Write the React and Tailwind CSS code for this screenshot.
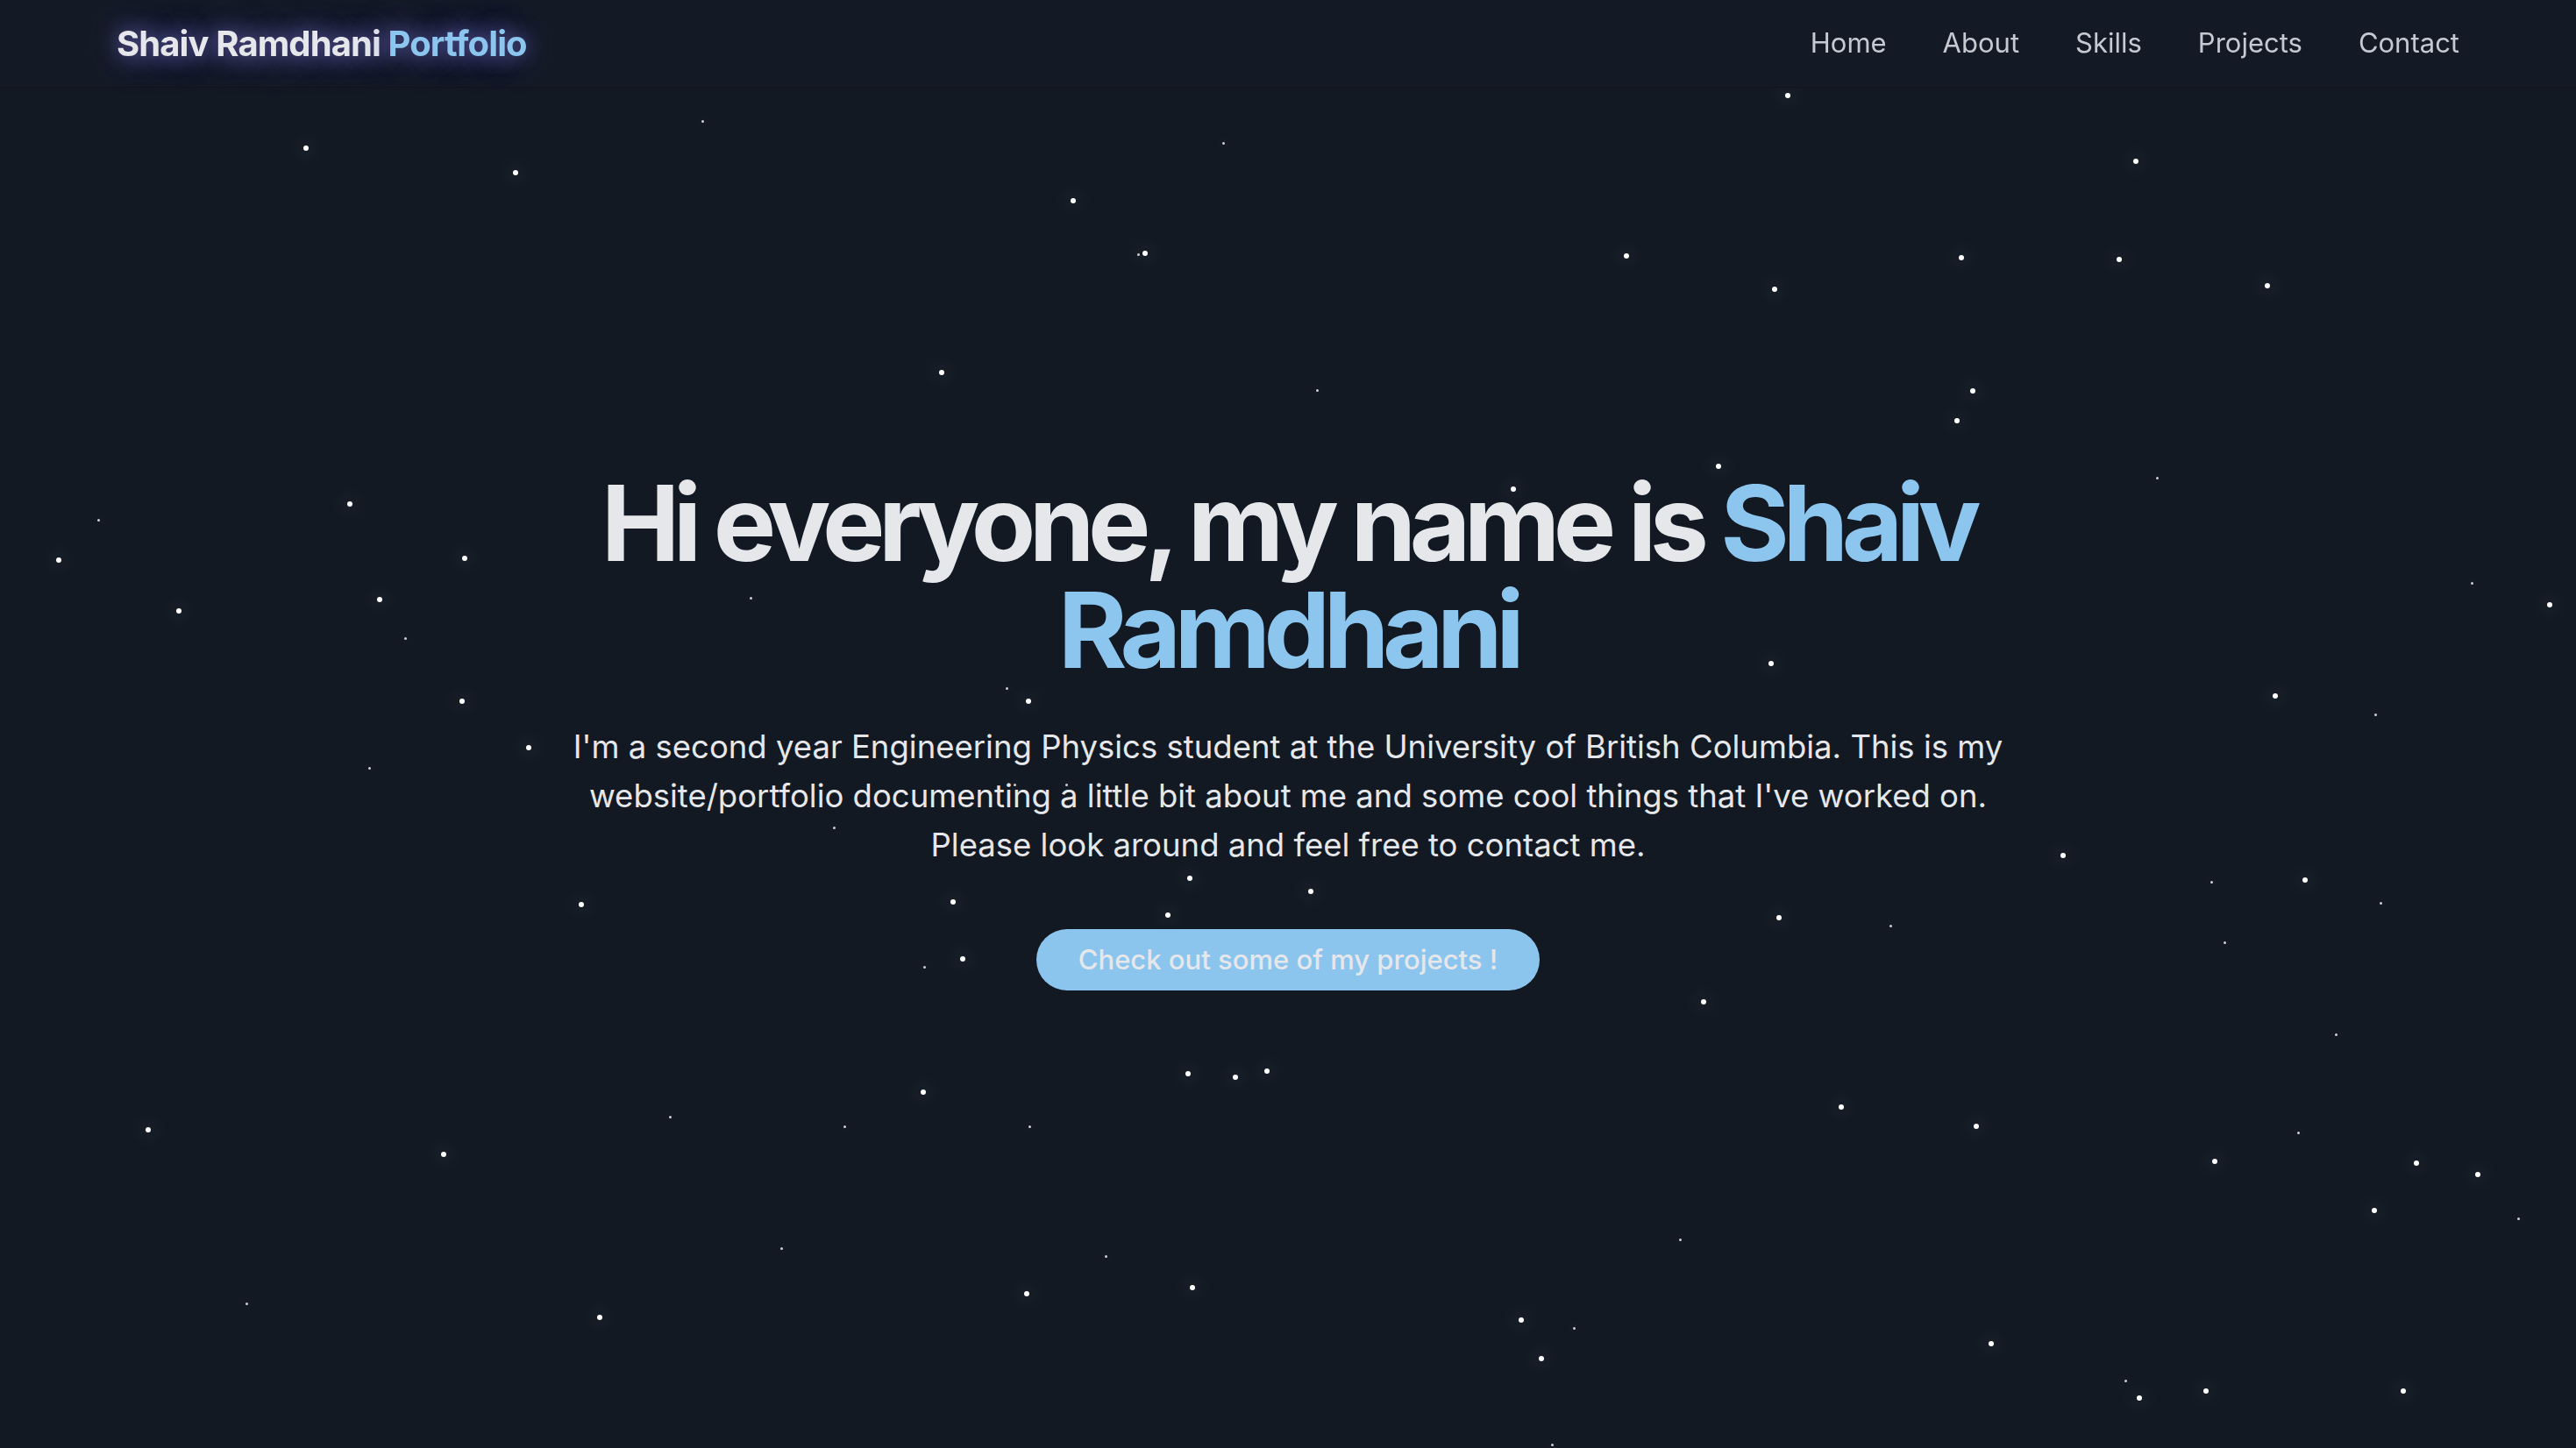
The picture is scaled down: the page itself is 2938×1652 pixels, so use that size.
import React from 'react';

const S = 2938 / 1568;

// star field: [x, y, big] in preview coords
const stars = [
  [314, 105, 1], [653, 122, 1], [990, 156, 1], [1300, 98, 1], [1380, 174, 1], [573, 227, 1],
  [1201, 238, 1], [1191, 256, 1], [213, 307, 1], [283, 340, 1], [36, 341, 1], [109, 372, 1],
  [231, 365, 1], [281, 427, 1], [322, 455, 1], [626, 427, 1], [1078, 404, 1], [1385, 424, 1],
  [1552, 368, 1], [1046, 284, 1], [921, 298, 1], [959, 340, 1], [354, 551, 1], [724, 535, 1],
  [798, 543, 1], [711, 557, 1], [586, 584, 1], [580, 549, 1], [1083, 559, 1], [1037, 610, 1],
  [1256, 521, 1], [1403, 536, 1], [562, 665, 1], [723, 654, 1], [752, 656, 1], [771, 652, 1],
  [1121, 674, 1], [1203, 686, 1], [90, 688, 1], [270, 703, 1], [1348, 707, 1], [1471, 708, 1],
  [1508, 715, 1], [1445, 737, 1], [726, 784, 1], [625, 788, 1], [365, 802, 1], [926, 804, 1],
  [938, 827, 1], [1212, 818, 1], [1302, 851, 1], [1343, 847, 1], [1463, 847, 1], [1088, 58, 1],
  [1194, 157, 1], [1080, 176, 1], [697, 154, 1], [186, 90, 1], [1290, 158, 1],
  [428, 74, 0], [745, 87, 0], [802, 238, 0], [1313, 291, 0], [60, 317, 0], [457, 364, 0],
  [247, 389, 0], [225, 468, 0], [613, 419, 0], [1446, 435, 0], [1505, 355, 0], [508, 504, 0],
  [1346, 537, 0], [1449, 550, 0], [1151, 564, 0], [1354, 574, 0], [563, 589, 0], [1422, 630, 0],
  [408, 680, 0], [514, 686, 0], [627, 686, 0], [1399, 690, 0], [476, 760, 0], [673, 765, 0],
  [1023, 755, 0], [1533, 742, 0], [150, 794, 0], [958, 809, 0], [1294, 841, 0], [945, 880, 0],
  [618, 478, 0], [649, 478, 0], [693, 155, 0],
];

const links = ['Home', 'About', 'Skills', 'Projects', 'Contact'];

export default function App() {
  return (
    <div
      className="relative h-screen w-full overflow-hidden bg-[#121923] text-[#e5e7eb]"
      style={{ fontFamily: 'Inter, "Liberation Sans", sans-serif' }}
    >
      {/* stars */}
      <div className="pointer-events-none absolute inset-0">
        {stars.map(([x, y, big], i) => (
          <span
            key={i}
            className={`absolute rounded-full bg-white ${big ? 'h-[6px] w-[6px] shadow-[0_0_22px_8px_rgba(255,255,255,0.05)]' : 'h-[3px] w-[3px] opacity-80 shadow-[0_0_14px_5px_rgba(255,255,255,0.04)]'}`}
            style={{ left: x * S - (big ? 3 : 1.5), top: y * S - (big ? 3 : 1.5) }}
          />
        ))}
      </div>

      {/* navbar */}
      <nav className="fixed inset-x-0 top-0 z-10 flex h-[100px] items-center justify-between border-b border-[#10151e] bg-[#151b26]/90 px-[133px]">
        <a className="text-[40px] font-bold tracking-[-0.9px] text-[#e5e7eb] [text-shadow:0_0_24px_rgba(140,130,240,0.75),0_0_48px_rgba(110,100,220,0.45)]">
          Shaiv Ramdhani <span className="text-[#8cc6ef]">Portfolio</span>
        </a>
        <ul className="flex items-center gap-[64px]">
          {links.map(l => (
            <li key={l} className="text-[31px] text-[#c6c9d1]">{l}</li>
          ))}
        </ul>
      </nav>

      {/* hero */}
      <section className="relative flex h-full flex-col items-center justify-center px-8 pt-[14px] text-center">
        <h1 className="max-w-[1792px] text-[120px] font-bold leading-[122px] tracking-[-7.5px] text-[#e5e7eb]">
          Hi everyone, my name is <span className="text-[#8cc6ef]">Shaiv Ramdhani</span>
        </h1>
        <p className="mt-[44px] max-w-[1690px] text-[36.5px] leading-[56px] text-[#e5e7eb]">
          I'm a second year Engineering Physics student at the University of British Columbia. This is my website/portfolio documenting a little bit about me and some cool things that I've worked on. Please look around and feel free to contact me.
        </p>
        <button className="mt-[68px] rounded-full bg-[#8bc5ee] px-[48px] py-[11px] text-[31px] font-medium leading-[48px] text-[#e5e7eb]">
          Check out some of my projects !
        </button>
      </section>
    </div>
  );
}
